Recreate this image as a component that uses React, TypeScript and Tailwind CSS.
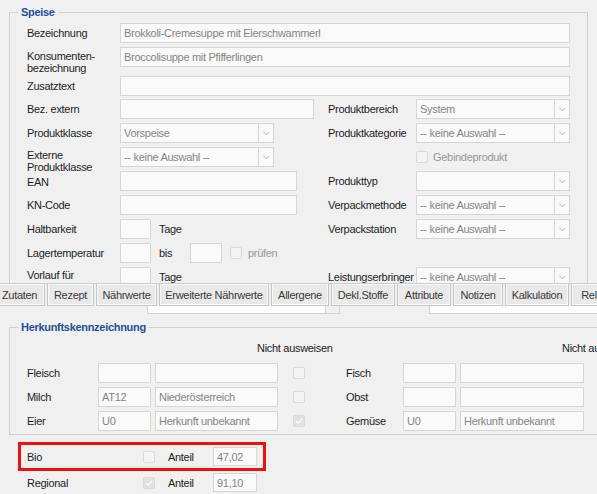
import type { ReactNode } from "react";
import { clsx } from "clsx";
import { twMerge } from "tailwind-merge";

type BoxProps = { value?: string; className?: string };

function Input({ value, className }: BoxProps) {
  return (
    <div
      className={twMerge(
        "flex h-[20px] shrink-0 items-center overflow-hidden whitespace-nowrap border border-[#d6d6d6] bg-[#f9f9f9] px-[3px] text-[#858585]",
        className,
      )}
    >
      {value}
    </div>
  );
}

function Select({ value, className }: BoxProps) {
  return (
    <div className={clsx("flex h-[20px] shrink-0", className)}>
      <div className="flex min-w-0 flex-1 items-center overflow-hidden whitespace-nowrap border border-[#d6d6d6] bg-[#f9f9f9] px-[3px] text-[#858585]">
        {value}
      </div>
      <div className="flex w-[15px] items-center justify-center border border-l-0 border-[#d6d6d6] bg-[#f9f9f9]">
        <svg width="7" height="5" viewBox="0 0 7 5" fill="none">
          <path d="M0.5 0.8 L3.5 3.8 L6.5 0.8" stroke="#b4b4b4" strokeWidth="1" />
        </svg>
      </div>
    </div>
  );
}

function Check({ checked, className }: { checked?: boolean; className?: string }) {
  return (
    <div
      className={clsx(
        "flex h-[12px] w-[12px] shrink-0 items-center justify-center rounded-[2px] border border-[#d9d9d9]",
        checked ? "bg-[#e1e1e1]" : "bg-[#f4f4f4]",
        className,
      )}
    >
      {checked && (
        <svg width="10" height="10" viewBox="0 0 10 10" fill="none">
          <path d="M2 5.2 L4.2 7.4 L8.2 2.6" stroke="#f7f7f7" strokeWidth="1.6" />
        </svg>
      )}
    </div>
  );
}

function Label({ children, className }: { children: ReactNode; className?: string }) {
  return <div className={twMerge("w-[93px] shrink-0 leading-[20px]", className)}>{children}</div>;
}

function RightPart({ label, children }: { label?: string; children?: ReactNode }) {
  return (
    <>
      <div className="w-[88px] shrink-0 whitespace-nowrap leading-[20px]">{label}</div>
      <div className="flex w-[154px] shrink-0 items-center">{children}</div>
    </>
  );
}

const tabs = [
  { label: "Zutaten", w: "w-[51px]" },
  { label: "Rezept", w: "w-[47px]" },
  { label: "Nährwerte", w: "w-[61px]" },
  { label: "Erweiterte Nährwerte", w: "w-[110px]" },
  { label: "Allergene", w: "w-[58px]" },
  { label: "Dekl.Stoffe", w: "w-[64px]" },
  { label: "Attribute", w: "w-[54px]" },
  { label: "Notizen", w: "w-[50px]" },
  { label: "Kalkulation", w: "w-[64px]" },
  { label: "Relationen", w: "w-[70px]" },
];

function OriginRow({
  left,
  right,
}: {
  left: [string, string, string, boolean];
  right: [string, string, string];
}) {
  return (
    <div className="flex h-[20px] items-center">
      <div className="w-[71px] shrink-0">{left[0]}</div>
      <Input className="w-[53px]" value={left[1]} />
      <Input className="ml-[4px] w-[123px]" value={left[2]} />
      <Check className="ml-[15px]" checked={left[3]} />
      <div className="ml-[41px] w-[57px] shrink-0">{right[0]}</div>
      <Input className="w-[53px]" value={right[1]} />
      <Input className="ml-[4px] w-[124px]" value={right[2]} />
      <Check className="ml-[15px]" checked={left[3]} />
    </div>
  );
}

function ShareRow({ label, checked, value }: { label: string; checked?: boolean; value: string }) {
  return (
    <>
      <div className="w-[116px] shrink-0">{label}</div>
      <Check checked={checked} />
      <div className="ml-[13px] w-[45px] shrink-0">Anteil</div>
      <Input className="h-[19px] w-[44px]" value={value} />
    </>
  );
}

export default function App() {
  return (
    <div className="h-[494px] w-[597px] overflow-hidden bg-[#f0f0f0] font-['Liberation_Sans',Arial,sans-serif] text-[11px] leading-[14px] tracking-[-0.3px] text-[#1e1e1e]">
      <div className="h-[283px] overflow-hidden px-[9px] pt-[5px]">
        <fieldset className="border border-[#cfcfcf] px-[17px] pb-6 pt-[4px]">
          <legend className="ml-[-9px] px-[3px] font-bold text-[#1d4f9a]">Speise</legend>

          <div className="flex h-[24px] items-start">
            <Label>Bezeichnung</Label>
            <Input className="flex-1" value="Brokkoli-Cremesuppe mit Eierschwammerl" />
          </div>
          <div className="flex h-[29px] items-start">
            <Label className="pt-[3px] leading-[12px]">
              Konsumenten-
              <br />
              bezeichnung
            </Label>
            <Input className="flex-1" value="Broccolisuppe mit Pfifferlingen" />
          </div>
          <div className="flex h-[23px] items-start">
            <Label>Zusatztext</Label>
            <Input className="flex-1" />
          </div>
          <div className="flex h-[24px] items-start">
            <Label>Bez. extern</Label>
            <div className="w-[208px] shrink-0">
              <Input className="w-[194px]" />
            </div>
            <RightPart label="Produktbereich">
              <Select className="w-full" value="System" />
            </RightPart>
          </div>
          <div className="flex h-[24px] items-start">
            <Label>Produktklasse</Label>
            <div className="w-[208px] shrink-0">
              <Select className="w-[154px]" value="Vorspeise" />
            </div>
            <RightPart label="Produktkategorie">
              <Select className="w-full" value="-- keine Auswahl --" />
            </RightPart>
          </div>
          <div className="flex h-[24px] items-start">
            <Label className="whitespace-nowrap pt-[2px] leading-[12px]">
              Externe
              <br />
              Produktklasse
            </Label>
            <div className="w-[208px] shrink-0">
              <Select className="w-[154px]" value="-- keine Auswahl --" />
            </div>
            <RightPart>
              <div className="flex h-[20px] items-center gap-[5px] text-[#979797]">
                <Check />
                Gebindeprodukt
              </div>
            </RightPart>
          </div>
          <div className="flex h-[24px] items-start">
            <Label className="pt-[1px]">EAN</Label>
            <div className="w-[208px] shrink-0">
              <Input className="w-[177px]" />
            </div>
            <RightPart label="Produkttyp">
              <Select className="w-full" />
            </RightPart>
          </div>
          <div className="flex h-[24px] items-start">
            <Label>KN-Code</Label>
            <div className="w-[208px] shrink-0">
              <Input className="w-[177px]" />
            </div>
            <RightPart label="Verpackmethode">
              <Select className="w-full" value="-- keine Auswahl --" />
            </RightPart>
          </div>
          <div className="flex h-[24px] items-start">
            <Label>Haltbarkeit</Label>
            <div className="flex w-[208px] shrink-0 items-center">
              <Input className="w-[31px]" />
              <span className="ml-[8px]">Tage</span>
            </div>
            <RightPart label="Verpackstation">
              <Select className="w-full" value="-- keine Auswahl --" />
            </RightPart>
          </div>
          <div className="flex h-[24px] items-start">
            <Label>Lagertemperatur</Label>
            <div className="flex w-[208px] shrink-0 items-center">
              <Input className="w-[31px]" />
              <span className="ml-[8px] w-[31px]">bis</span>
              <Input className="w-[32px]" />
              <Check className="ml-[8px]" />
              <span className="ml-[6px] text-[#979797]">prüfen</span>
            </div>
          </div>
          <div className="flex h-[24px] items-start">
            <Label className="pt-[2px] leading-[12px]">
              Vorlauf für
              <br />
              Produktion
            </Label>
            <div className="flex w-[208px] shrink-0 items-center">
              <Input className="w-[31px]" />
              <span className="ml-[8px]">Tage</span>
            </div>
            <RightPart label="Leistungserbringer">
              <Select className="w-full" value="-- keine Auswahl --" />
            </RightPart>
          </div>
        </fieldset>
      </div>

      <div className="ml-[-6px] flex h-[23px] gap-[2px] border-t border-[#cdcdcd]">
        {tabs.map((tab) => (
          <div
            key={tab.label}
            className={clsx(
              "flex h-[22px] shrink-0 items-center justify-center whitespace-nowrap border border-t-0 border-[#c6c6c6] bg-[#e9e9e9] text-[#3a3a3a] shadow-[inset_0_0_0_1px_#f8f8f8]",
              tab.w,
            )}
          >
            {tab.label}
          </div>
        ))}
      </div>

      <div className="flex h-[8px]">
        <div className="w-[147px] shrink-0" />
        <div className="w-[178px] shrink-0 border-b border-l border-[#d2d2d2] bg-white" />
        <div className="w-[15px] shrink-0 border-x border-b border-[#d2d2d2]" />
        <div className="w-[89px] shrink-0" />
        <div className="flex-1 border-b border-l border-[#d2d2d2] bg-white" />
      </div>

      <div className="mt-[6px] pl-[9px]">
        <fieldset className="w-[700px] border border-[#cfcfcf] pb-[3px] pl-[17px]">
          <legend className="ml-[-9px] px-[3px] font-bold text-[#1d4f9a]">Herkunftskennzeichnung</legend>
          <div className="mt-[7px] flex h-[14px] whitespace-nowrap">
            <span className="ml-[230px] w-[305px] shrink-0">Nicht ausweisen</span>
            <span>Nicht ausweisen</span>
          </div>
          <div className="mt-[8px] flex flex-col gap-[4px]">
            <OriginRow left={["Fleisch", "", "", false]} right={["Fisch", "", ""]} />
            <OriginRow left={["Milch", "AT12", "Niederösterreich", false]} right={["Obst", "", ""]} />
            <OriginRow
              left={["Eier", "U0", "Herkunft unbekannt", true]}
              right={["Gemüse", "U0", "Herkunft unbekannt"]}
            />
          </div>
        </fieldset>
      </div>

      <div className="ml-[18px] mt-[7px] flex h-[29px] w-[248px] items-center border-[3px] border-[#ee1111] pl-[6px]">
        <ShareRow label="Bio" value="47,02" />
      </div>
      <div className="ml-[21px] mt-[2px] flex h-[19px] items-center pl-[6px]">
        <ShareRow label="Regional" checked value="91,10" />
      </div>
    </div>
  );
}
